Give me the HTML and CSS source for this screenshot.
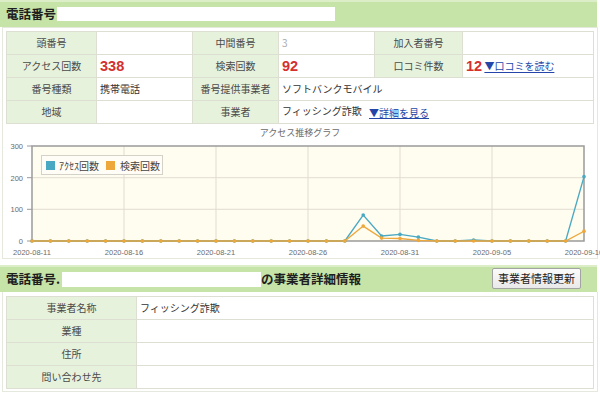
FILE: index.html
```html
<!DOCTYPE html>
<html lang="ja">
<head>
  <meta charset="UTF-8">
  <title>電話番号情報</title>
  <link rel="stylesheet" href="styles.css">
</head>
<body>
  <!-- Number summary -->
  <div class="bar">
    <h2 class="bar-title">電話番号<span class="mask mask-top"></span></h2>
  </div>
  <div class="panel">
    <table class="info">
      <colgroup>
        <col class="c-label1">
        <col class="c-val1">
        <col class="c-label2">
        <col class="c-val2">
        <col class="c-label3">
        <col>
      </colgroup>
      <tr>
        <th>頭番号</th><td></td>
        <th>中間番号</th><td class="dim">3</td>
        <th>加入者番号</th><td></td>
      </tr>
      <tr>
        <th>アクセス回数</th><td><span class="count">338</span></td>
        <th>検索回数</th><td><span class="count">92</span></td>
        <th>口コミ件数</th><td><span class="count">12</span> <a href="#" class="more">▼口コミを読む</a></td>
      </tr>
      <tr>
        <th>番号種類</th><td>携帯電話</td>
        <th>番号提供事業者</th><td colspan="3">ソフトバンクモバイル</td>
      </tr>
      <tr>
        <th>地域</th><td></td>
        <th>事業者</th><td colspan="3">フィッシング詐欺 <a href="#" class="more detail-link">▼詳細を見る</a></td>
      </tr>
    </table>

    <!-- Access chart -->
    <svg class="chart" width="588" height="134" viewBox="6 124 588 134">
      <defs>
        <marker id="mk-access" viewBox="-3 -3 6 6" markerWidth="5" markerHeight="5" markerUnits="userSpaceOnUse">
          <circle r="2.2" fill="#4aa9c2"/>
        </marker>
        <marker id="mk-search" viewBox="-3 -3 6 6" markerWidth="5" markerHeight="5" markerUnits="userSpaceOnUse">
          <circle r="2.2" fill="#eea73a"/>
        </marker>
      </defs>
      <text class="chart-title" x="300" y="136">アクセス推移グラフ</text>

      <rect x="32" y="146" width="552" height="95" fill="#fffcf0"/>
      <g class="grid">
        <line x1="124" y1="146" x2="124" y2="241"/>
        <line x1="216" y1="146" x2="216" y2="241"/>
        <line x1="308" y1="146" x2="308" y2="241"/>
        <line x1="400" y1="146" x2="400" y2="241"/>
        <line x1="492" y1="146" x2="492" y2="241"/>
        <line x1="32" y1="177.7" x2="584" y2="177.7"/>
        <line x1="32" y1="209.3" x2="584" y2="209.3"/>
      </g>
      <rect class="frame" x="32" y="146" width="552" height="95"/>
      <g class="ticks">
        <line x1="27" y1="146" x2="32" y2="146"/>
        <line x1="27" y1="177.7" x2="32" y2="177.7"/>
        <line x1="27" y1="209.3" x2="32" y2="209.3"/>
        <line x1="27" y1="241" x2="32" y2="241"/>
      </g>
      <g class="y-labels">
        <text x="23" y="149">300</text>
        <text x="23" y="180.5">200</text>
        <text x="23" y="212">100</text>
        <text x="23" y="244">0</text>
      </g>
      <g class="x-labels">
        <text x="32" y="255">2020-08-11</text>
        <text x="124" y="255">2020-08-16</text>
        <text x="216" y="255">2020-08-21</text>
        <text x="308" y="255">2020-08-26</text>
        <text x="400" y="255">2020-08-31</text>
        <text x="492" y="255">2020-09-05</text>
        <text x="584" y="255">2020-09-10</text>
      </g>

      <polyline class="line-access" marker-start="url(#mk-access)" marker-mid="url(#mk-access)" marker-end="url(#mk-access)"
        points="32,241 50.4,241 68.8,241 87.2,241 105.6,241 124,241 142.4,241 160.8,241 179.2,241 197.6,241 216,241 234.4,241 252.8,241 271.2,241 289.6,241 308,241 326.4,241 344.8,241 363.2,215 381.6,236 400,234.3 418.4,237.2 436.8,241 455.2,241 473.6,240 492,241 510.4,241 528.8,241 547.2,241 565.6,241 584,176.7"/>
      <polyline class="line-search" marker-start="url(#mk-search)" marker-mid="url(#mk-search)" marker-end="url(#mk-search)"
        points="32,241 50.4,241 68.8,241 87.2,241 105.6,241 124,241 142.4,241 160.8,241 179.2,241 197.6,241 216,241 234.4,241 252.8,241 271.2,241 289.6,241 308,241 326.4,241 344.8,241 363.2,226.1 381.6,238.1 400,238.5 418.4,240.4 436.8,241 455.2,241 473.6,241 492,241 510.4,241 528.8,241 547.2,241 565.6,241 584,231.2"/>

      <g class="legend">
        <rect x="41.5" y="155.5" width="121" height="19" fill="#fffdf6" stroke="#d4d2c8"/>
        <rect x="46" y="161" width="9" height="9" fill="#4aa9c2"/>
        <text x="59" y="169.5">ｱｸｾｽ回数</text>
        <rect x="106" y="161" width="9" height="9" fill="#eea73a"/>
        <text x="120" y="169.5">検索回数</text>
      </g>
    </svg>
  </div>

  <!-- Operator detail -->
  <div class="bar bar-detail">
    <h2 class="bar-title">電話番号.<span class="mask mask-detail"></span>の事業者詳細情報</h2>
    <button class="update-btn">事業者情報更新</button>
  </div>
  <div class="panel panel-detail">
    <table class="info detail">
      <colgroup>
        <col class="c-detail-label">
        <col>
      </colgroup>
      <tr><th>事業者名称</th><td>フィッシング詐欺</td></tr>
      <tr><th>業種</th><td></td></tr>
      <tr><th>住所</th><td></td></tr>
      <tr><th>問い合わせ先</th><td></td></tr>
    </table>
  </div>
</body>
</html>
```

FILE: styles.css
```css
/* Base */
html, body {
  overflow: hidden;
}

body {
  margin: 0;
  width: 600px;
  font-family: "Noto Sans CJK JP", sans-serif;
  color: #333;
  background: #fff;
}

/* Green section bars */
.bar {
  height: 27px;
  margin-right: 3px;
  padding-left: 6px;
  box-sizing: border-box;
  display: flex;
  align-items: center;
  background: linear-gradient(#dbeec7 0, #dbeec7 2px, #c6e3a8 2px);
}

.bar-title {
  margin: 0;
  padding-top: 1px;
  font-size: 12.5px;
  line-height: 16px;
  font-weight: bold;
  color: #1e1e1e;
  display: flex;
  align-items: center;
}

.mask {
  display: inline-block;
  background: #fff;
}

.mask-top {
  width: 278px;
  height: 14px;
  margin-left: 1px;
}

.mask-detail {
  width: 199px;
  height: 15px;
  margin-left: 2px;
}

.bar-detail {
  margin-top: 6px;
  padding-right: 16px;
  justify-content: space-between;
}

.update-btn {
  height: 21px;
  padding: 0 5px;
  font-family: inherit;
  font-size: 11px;
  line-height: 19px;
  color: #222;
  border: 1px solid #a3a3a3;
  border-radius: 2px;
  background: linear-gradient(#fbfbfb, #e9e9e9);
  cursor: pointer;
}

/* Panels */
.panel {
  margin: 0 2px;
  padding: 3px 3px 0;
  border: 1px solid #e5e8dc;
}

.panel-detail {
  padding: 4px 3px 2px;
  border-top: none;
}

/* Info tables */
.info {
  width: 100%;
  border-collapse: collapse;
  table-layout: fixed;
  font-size: 10px;
}

.info th,
.info td {
  height: 22px;
  padding: 0 3px;
  line-height: 14px;
  border: 1px solid #dcdfd2;
  white-space: nowrap;
  overflow: hidden;
}

.info th {
  background: #e7f2dd;
  font-weight: normal;
  color: #4a4a4a;
  text-align: center;
}

.info td {
  text-align: left;
  color: #333;
}

.info td.dim {
  color: #aaa;
}

.c-label1 { width: 90px; }
.c-val1 { width: 96px; }
.c-label2 { width: 86px; }
.c-val2 { width: 96px; }
.c-label3 { width: 88px; }
.c-detail-label { width: 130px; }

.count {
  font-family: "Liberation Sans", Arial, sans-serif;
  font-size: 14.5px;
  font-weight: bold;
  color: #d3302e;
  vertical-align: middle;
}

.more {
  color: #2446a8;
  font-size: 10px;
  vertical-align: middle;
}

.detail-link {
  margin-left: 5px;
}

/* Chart */
.chart {
  display: block;
  overflow: visible;
}

.chart text {
  font-family: "Liberation Sans", Arial, sans-serif;
  fill: #6b6b6b;
}

.chart .chart-title {
  font-family: "Noto Sans CJK JP", sans-serif;
  font-size: 9px;
  text-anchor: middle;
}

.grid line {
  stroke: #e2ddcf;
  stroke-width: 1;
}

.frame {
  fill: none;
  stroke: #9a9a9a;
  stroke-width: 1.5;
}

.ticks line {
  stroke: #9a9a9a;
}

.y-labels text {
  font-size: 7.5px;
  text-anchor: end;
}

.x-labels text {
  font-size: 7.5px;
  text-anchor: middle;
}

.line-access,
.line-search {
  fill: none;
  stroke-width: 1.3;
}

.line-access {
  stroke: #4aa9c2;
}

.line-search {
  stroke: #eea73a;
}

.legend text {
  font-family: "Noto Sans CJK JP", sans-serif;
  font-size: 10px;
  fill: #444;
}
```
